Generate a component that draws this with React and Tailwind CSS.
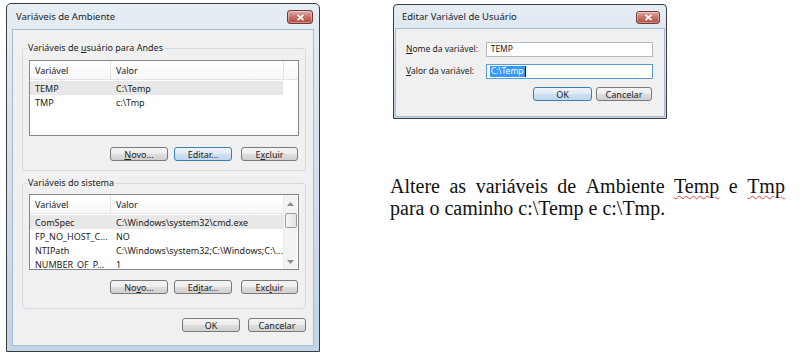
import React from 'react';

const sans = "font-['Noto_Sans',sans-serif]";

const CloseBtn = ({ size }) => (
  <div className={`${size} rounded-[3px] border border-[#6e3b36] bg-[linear-gradient(#e2b0aa,#c7766e_45%,#b24a40)] flex items-center justify-center shadow-[inset_0_0_0_1px_rgba(255,255,255,0.35)]`}>
    <svg width="9" height="7" viewBox="0 0 9 7">
      <path d="M1.5 0.8 L7.5 6.2 M7.5 0.8 L1.5 6.2" stroke="#ffffff" strokeWidth="1.7" />
    </svg>
  </div>
);

const Btn = ({ children, w = 'w-[58px]', focus, className = '' }) => (
  <div
    className={`${w} ${className} h-[14px] shrink-0 flex items-center justify-center rounded-[3px] border text-[9px] leading-none text-[#222222] ${
      focus
        ? 'border-[#3c7fb1] bg-[linear-gradient(#eef5fb,#dfeaf5_50%,#cddff0_51%,#c2d7ec)]'
        : 'border-[#7a7a7a] bg-[linear-gradient(#f4f4f4,#ececec_50%,#dedede_51%,#d0d0d0)]'
    }`}
  >
    {children}
  </div>
);

const Arrow = ({ up }) => (
  <svg width="7" height="4" viewBox="0 0 7 4">
    <path d={up ? 'M0 4 L3.5 0 L7 4 Z' : 'M0 0 L3.5 4 L7 0 Z'} fill="#8c8c8c" />
  </svg>
);

const ScrollBar = () => (
  <div className="w-[14px] shrink-0 flex flex-col items-center bg-[#f3f3f3] border-l border-[#ebebeb]">
    <div className="h-[17px] flex items-center justify-center">
      <Arrow up />
    </div>
    <div className="mt-[1px] w-[12px] h-[15px] rounded-[2px] border border-[#9b9b9b] bg-[linear-gradient(90deg,#f6f6f6,#e3e3e3)]" />
    <div className="flex-1" />
    <div className="h-[14px] flex items-center justify-center">
      <Arrow />
    </div>
  </div>
);

const ListView = ({ rows, scroll }) => (
  <div className="h-[76px] border border-[#828790] bg-white flex overflow-hidden text-[9px] leading-none text-[#222222]">
    <div className="w-[253px] shrink-0 flex flex-col">
      <div className="h-[19px] shrink-0 flex border-b border-[#e5e5e5] bg-[linear-gradient(#ffffff,#f6f7f9)]">
        <div className="w-[81px] border-r border-[#e3e3e3] pl-[5px] flex items-center">Variável</div>
        <div className="flex-1 pl-[5px] flex items-center">Valor</div>
      </div>
      <div className="pt-[1px] flex flex-col">
        {rows.map(([name, value], i) => (
          <div key={name} className={`h-[14px] shrink-0 flex items-center ${i === 0 ? 'bg-[#e8e8e8]' : ''}`}>
            <div className="w-[81px] pl-[5px] whitespace-nowrap">{name}</div>
            <div className="flex-1 pl-[5px] whitespace-nowrap">{value}</div>
          </div>
        ))}
      </div>
    </div>
    {scroll ? (
      <ScrollBar />
    ) : (
      <div className="flex-1 h-[19px] border-l border-b border-[#e5e5e5] bg-[linear-gradient(#ffffff,#f6f7f9)]" />
    )}
  </div>
);

const Group = ({ label, className = '', children }) => (
  <fieldset className={`rounded-[3px] border border-[#d3dbe2] px-[6px] pt-[6px] ${className}`}>
    <legend className="ml-[-2px] px-[1px] text-[9px] leading-[12px] text-[#222222]">{label}</legend>
    {children}
  </fieldset>
);

const userRows = [
  ['TEMP', 'C:\\Temp'],
  ['TMP', 'c:\\Tmp'],
];

const systemRows = [
  ['ComSpec', 'C:\\Windows\\system32\\cmd.exe'],
  ['FP_NO_HOST_C...', 'NO'],
  ['NTIPath', 'C:\\Windows\\system32;C:\\Windows;C:\\...'],
  ['NUMBER_OF_P...', '1'],
];

const EnvDialog = () => (
  <div className={`${sans} ml-[6px] mt-[3px] w-[314px] h-[349px] shrink-0 flex flex-col border border-[#3b3b3b] rounded-t-[5px] bg-[linear-gradient(#e6edf4,#d6e2ef_40%,#c0d4ea)] px-[5px] pb-[5px]`}>
    <div className="h-[25px] shrink-0 flex items-start justify-between pl-[4px] pr-[1px]">
      <span className="self-center text-[9.5px] leading-none text-[#222222]">Variáveis de Ambiente</span>
      <div className="pt-[6px]">
        <CloseBtn size="w-[26px] h-[14px]" />
      </div>
    </div>
    <div className="flex-1 flex flex-col bg-[#f0f0f0] border border-[#a9bacd] pl-[9px] pr-[7px] pt-[12px]">
      <Group
        label={
          <>
            Variáveis de <span className="underline">u</span>suário para Andes
          </>
        }
        className="pb-[9px]"
      >
        <ListView rows={userRows} />
        <div className="mt-[11px] flex justify-end">
          <Btn><span className="underline">N</span>ovo...</Btn>
          <Btn focus className="ml-[6px]">Editar...</Btn>
          <Btn w="w-[57px]" className="ml-[9px] mr-[1px]">E<span className="underline">x</span>cluir</Btn>
        </div>
      </Group>
      <Group label="Variáveis do sistema" className="mt-[6px] pb-[14px] !pt-[5px]">
        <ListView rows={systemRows} scroll />
        <div className="mt-[10px] flex justify-end">
          <Btn>No<span className="underline">v</span>o...</Btn>
          <Btn className="ml-[6px]">Ed<span className="underline">i</span>tar...</Btn>
          <Btn w="w-[57px]" className="ml-[9px] mr-[1px]">Exc<span className="underline">l</span>uir</Btn>
        </div>
      </Group>
      <div className="mt-[9px] flex justify-end gap-[8px]">
        <Btn>OK</Btn>
        <Btn>Cancelar</Btn>
      </div>
    </div>
  </div>
);

const EditDialog = () => (
  <div className={`${sans} ml-[3px] mt-[4px] w-[274px] h-[115px] flex flex-col border border-[#3b3b3b] rounded-t-[4px] bg-[linear-gradient(#e6edf4,#d4e0ee_50%,#c4d6ea)] px-[1px] pb-[1px]`}>
    <div className="h-[23px] shrink-0 flex items-start justify-between pl-[7px] pr-[5px]">
      <span className="self-center text-[9.5px] leading-none text-[#222222]">Editar Variável de Usuário</span>
      <div className="pt-[6px]">
        <CloseBtn size="w-[24px] h-[13px]" />
      </div>
    </div>
    <div className="flex-1 flex flex-col bg-[#f0f0f0] border border-[#a9bacd] pl-[10px] pr-[11px] pt-[13px] text-[9px] leading-none text-[#222222]">
      <div className="flex items-center">
        <div className="w-[80px] text-[8.5px]"><span className="underline">N</span>ome da variável:</div>
        <div className="w-[168px] h-[15px] border border-[#b5b9c0] bg-white flex items-center pl-[4px] text-[8.5px]">TEMP</div>
      </div>
      <div className="mt-[7px] flex items-center">
        <div className="w-[80px] text-[8.5px]"><span className="underline">V</span>alor da variável:</div>
        <div className="w-[168px] h-[15px] border border-[#5a9bd5] bg-white flex items-center pl-[3px] text-[8.5px]">
          <span className="bg-[#3399ff] text-white px-[1px] h-[11px] flex items-center">C:\Temp</span>
          <span className="w-[1px] h-[11px] bg-black" />
        </div>
      </div>
      <div className="mt-[8px] flex justify-end">
        <Btn w="w-[59px]" focus>OK</Btn>
        <Btn w="w-[56px]" className="ml-[4px] mr-[1px]">Cancelar</Btn>
      </div>
    </div>
  </div>
);

const Note = () => (
  <div className="mt-[56px] w-[395px] font-['Liberation_Serif',serif] text-[20px] leading-[22px] text-[#111111]">
    <div className="whitespace-nowrap flex justify-between">
      <span>Altere</span>
      <span>as</span>
      <span>variáveis</span>
      <span>de</span>
      <span>Ambiente</span>
      <span className="underline decoration-wavy decoration-[#e04040] decoration-1 underline-offset-2">Temp</span>
      <span>e</span>
      <span className="underline decoration-wavy decoration-[#e04040] decoration-1 underline-offset-2">Tmp</span>
    </div>
    <div>para o caminho c:\Temp e c:\Tmp.</div>
  </div>
);

export default function App() {
  return (
    <div className="w-[800px] h-[357px] bg-white flex overflow-hidden">
      <EnvDialog />
      <div className="ml-[70px] flex flex-col">
        <EditDialog />
        <Note />
      </div>
    </div>
  );
}
